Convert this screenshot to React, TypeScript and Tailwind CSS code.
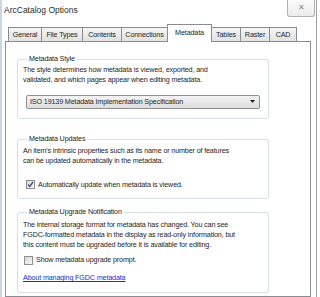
import React from "react";

const tabText = "text-[7.2px] leading-[10px] tracking-[-0.15px] text-[#1e1e1e] text-center";

function Tab({ label, w, first }: { label: string; w: string; first?: boolean }) {
  return (
    <div
      className={
        "h-[14px] border-r border-t border-[#898c95] bg-gradient-to-b from-[#f5f5f5] to-[#e2e2e2] pt-[2px] " +
        tabText +
        " " +
        w +
        (first ? " border-l" : "")
      }
    >
      {label}
    </div>
  );
}

function Group({ title, children, className }: { title: string; children: React.ReactNode; className?: string }) {
  return (
    <fieldset className={"w-[252px] rounded-[3px] border border-[#d5dfe5] px-[5px] " + (className ?? "")}>
      <legend className="ml-[4px] px-[2px] text-[7.2px] leading-[10px] tracking-[-0.15px] text-[#1e1e1e]">{title}</legend>
      {children}
    </fieldset>
  );
}

function Check({ checked }: { checked?: boolean }) {
  return (
    <div className="flex h-[9px] w-[9px] shrink-0 items-center justify-center border border-[#8f8f8f] bg-gradient-to-br from-[#d8d8d8] to-[#f8f8f8]">
      {checked && (
        <svg width="7" height="7" viewBox="0 0 7 7">
          <path d="M1 3.5 L2.8 5.5 L6 1" stroke="#3b4e8c" strokeWidth="1.3" fill="none" />
        </svg>
      )}
    </div>
  );
}

export default function App() {
  return (
    <div
      className="relative h-[297px] w-[320px] overflow-hidden bg-white text-[#1e1e1e]"
      style={{ fontFamily: '"Liberation Sans", Arial, sans-serif' }}
    >
      <div className="flex h-full w-[317px] flex-col border-l-2 border-r border-l-[#c9d5e0] border-r-[#a0a0a0] bg-white">
        {/* title bar */}
        <div className="flex h-[24px] items-start justify-between">
          <div className="pl-[2px] pt-[5px] text-[8.5px] leading-[10px] text-[#2a2a2a]">ArcCatalog Options</div>
          <div className="mr-[1px] flex h-[17px] w-[28px] items-center justify-center rounded-b-[3px] border border-t-0 border-[#b0b0b0] bg-gradient-to-b from-[#fbfbfb] to-[#ececec] text-[8px] text-[#8a8a8a]">
            ✕
          </div>
        </div>
        <div className="flex flex-1 flex-col pl-[3px] pr-[5px]">
          {/* tabs */}
          <div className="flex h-[17px] items-end pl-[3px]">
            <Tab label="General" w="w-[34px]" first />
            <Tab label="File Types" w="w-[41px]" />
            <Tab label="Contents" w="w-[39px]" />
            <Tab label="Connections" w="w-[46px]" />
            <div
              className={
                "relative z-10 -mb-px -ml-px h-[18px] w-[45px] border border-b-0 border-[#898c95] bg-white pt-[3px] " +
                tabText
              }
            >
              Metadata
            </div>
            <Tab label="Tables" w="w-[29px]" />
            <Tab label="Raster" w="w-[29px]" />
            <Tab label="CAD" w="w-[27px]" />
          </div>
          {/* panel */}
          <div className="flex flex-1 flex-col border border-[#898c95] bg-white pl-[11px] pt-[12px] text-[7.2px] leading-[9.8px] tracking-[-0.15px]">
            <Group title="Metadata Style" className="h-[65px]">
              <p className="mt-[1px]">
                The style determines how metadata is viewed, exported, and
                <br />
                validated, and which pages appear when editing metadata.
              </p>
              <div className="mt-[10px] ml-[3px] flex h-[14px] w-[234px] items-center justify-between rounded-[2px] border border-[#8f8f8f] bg-gradient-to-b from-[#f4f4f4] to-[#dedede] pl-[3px] pr-[4px]">
                <span>ISO 19139 Metadata Implementation Specification</span>
                <svg width="5" height="3" viewBox="0 0 5 3">
                  <path d="M0 0 H5 L2.5 3 Z" fill="#222" />
                </svg>
              </div>
            </Group>
            <Group title="Metadata Updates" className="mt-[15px] h-[65px]">
              <p className="mt-[2px]">
                An item's intrinsic properties such as its name or number of features
                <br />
                can be updated automatically in the metadata.
              </p>
              <div className="mt-[14px] ml-[3px] flex items-center gap-[3px]">
                <Check checked />
                <span>Automatically update when metadata is viewed.</span>
              </div>
            </Group>
            <Group title="Metadata Upgrade Notification" className="mt-[8px] h-[86px]">
              <p className="mt-[3px]">
                The internal storage format for metadata has changed. You can see
                <br />
                FGDC-formatted metadata in the display as read-only information, but
                <br />
                this content must be upgraded before it is available for editing.
              </p>
              <div className="mt-[6px] ml-[1px] flex items-center gap-[3px]">
                <Check />
                <span>Show metadata upgrade prompt.</span>
              </div>
              <div className="mt-[8px] text-[#0d35c9] underline">About managing FGDC metadata</div>
            </Group>
          </div>
        </div>
      </div>
    </div>
  );
}
